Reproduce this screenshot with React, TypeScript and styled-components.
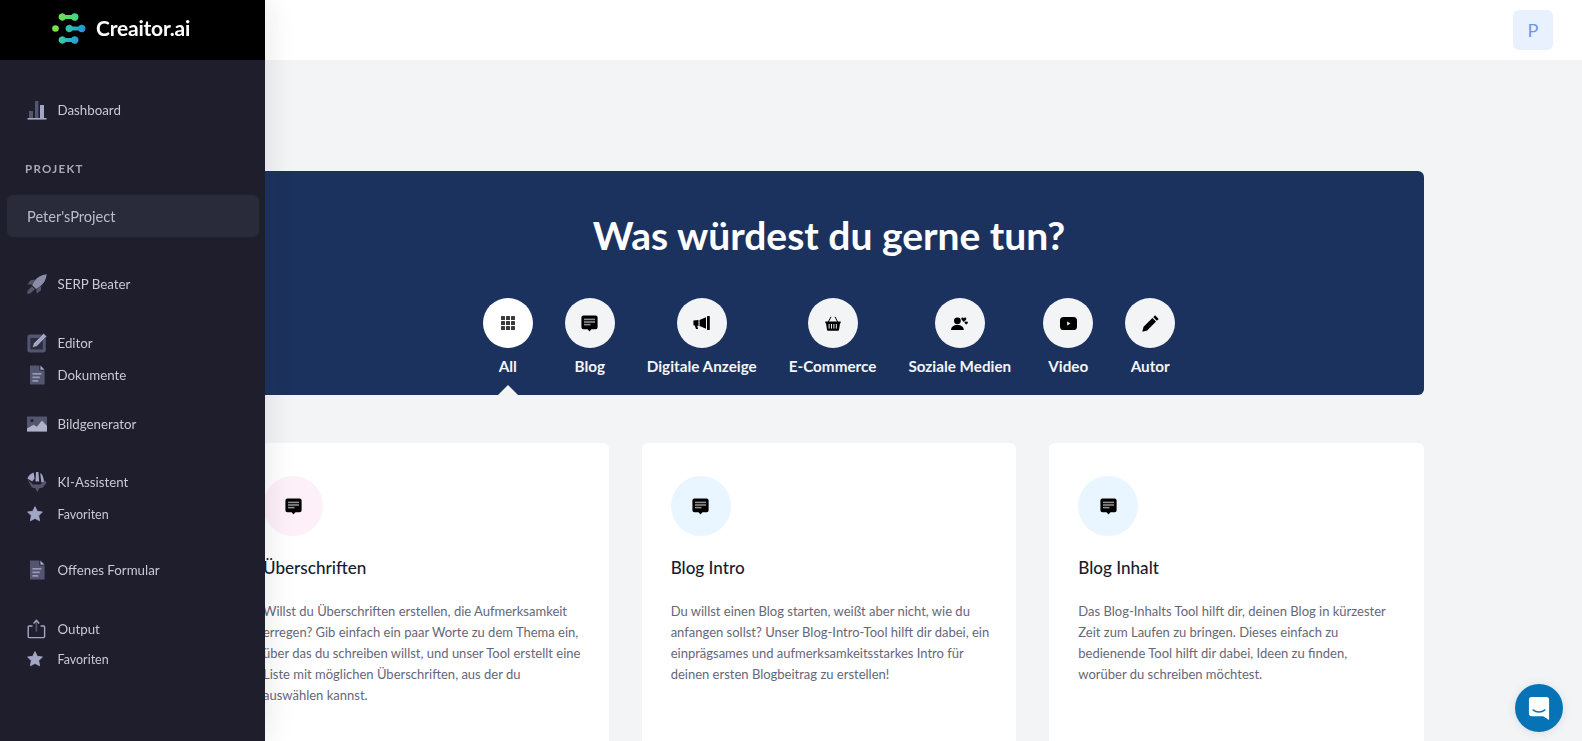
import React from "react";
import styled, { createGlobalStyle } from "styled-components";

const Global = createGlobalStyle`
  html, body { margin: 0; padding: 0; height: 100%; overflow: hidden; background: #f3f4f6; }
  * { box-sizing: border-box; }
  body { font-family: "Lato", "Liberation Sans", sans-serif; }
`;

const Page = styled.div`
  width: 100%;
  height: 741px;
  overflow: hidden;
  background: #f3f4f6;
  display: flex;
  flex-direction: column;
`;

const Sidebar = styled.aside`
  position: fixed;
  left: 0;
  top: 0;
  bottom: 0;
  width: 265px;
  background: #1e1e2d;
  box-shadow: 0 0 28px rgba(30, 30, 45, 0.12);
  z-index: 3;
`;

const LogoBar = styled.div`
  height: 60px;
  background: #000;
  display: flex;
  align-items: center;
  padding: 0 0 3px 52px;
  gap: 10px;
`;

const LogoText = styled.span`
  color: #fff;
  font-size: 21px;
  font-weight: 700;
  letter-spacing: -0.2px;
  padding-bottom: 3px;
`;

const Menu = styled.nav`
  display: flex;
  flex-direction: column;
  padding-top: 34px;
`;

const Item = styled.div<{ $top?: number; $small?: boolean }>`
  height: 32px;
  margin-top: ${(p) => p.$top ?? 0}px;
  padding-left: 27px;
  display: flex;
  align-items: center;
  color: #c9c9d3;
  font-size: ${(p) => (p.$small ? 12.5 : 13.3)}px;
`;

const IconSlot = styled.span`
  width: 30.5px;
  height: 22px;
  flex: none;
  display: flex;
  align-items: center;
`;

const SectionLabel = styled.div`
  margin-top: 35px;
  height: 16px;
  line-height: 16px;
  padding-left: 25px;
  color: #a9a9b8;
  font-size: 11.5px;
  font-weight: 700;
  letter-spacing: 1.3px;
`;

const ProjectRow = styled.div`
  margin: 18px 6px 0 7px;
  height: 42px;
  border-radius: 6px;
  background: #2a2b3a;
  display: flex;
  align-items: center;
  padding-left: 20px;
  color: #bcbcc9;
  font-size: 14.6px;
`;

const TopBar = styled.header`
  height: 60px;
  flex: none;
  background: #fff;
  display: flex;
  align-items: center;
  justify-content: flex-end;
  padding-right: 29px;
`;

const Avatar = styled.div`
  width: 40px;
  height: 40px;
  border-radius: 6px;
  background: #e9f1fe;
  color: #6f97e6;
  font-size: 18px;
  display: flex;
  align-items: center;
  justify-content: center;
`;

const Content = styled.main`
  width: 1190px;
  margin-left: 234px;
  padding-top: 111px;
  display: flex;
  flex-direction: column;
`;

const Banner = styled.section`
  position: relative;
  height: 224px;
  border-radius: 6px;
  background: #1c325e;
  display: flex;
  flex-direction: column;
  align-items: center;
`;

const Title = styled.h1`
  margin: 36px 0 0;
  color: #fff;
  font-size: 39px;
  line-height: 56px;
  font-weight: 700;
`;

const Tabs = styled.div`
  margin-top: 35px;
  display: flex;
  gap: 32px;
`;

const Tab = styled.div`
  position: relative;
  display: flex;
  flex-direction: column;
  align-items: center;
  color: #f3f4f6;
  font-size: 15.25px;
  font-weight: 700;
  line-height: 20px;
  min-width: 50px;
`;

const TabCircle = styled.div<{ $active?: boolean }>`
  width: 50px;
  height: 50px;
  border-radius: 50%;
  background: ${(p) => (p.$active ? "#fff" : "#f3f4f6")};
  display: flex;
  align-items: center;
  justify-content: center;
  margin-bottom: 8px;
`;

const Caret = styled.span`
  position: absolute;
  left: 50%;
  top: 87px;
  margin-left: -10px;
  width: 0;
  height: 0;
  border-left: 10px solid transparent;
  border-right: 10px solid transparent;
  border-bottom: 10px solid #f3f4f6;
`;

const Cards = styled.div`
  margin-top: 48px;
  display: grid;
  grid-template-columns: repeat(3, 1fr);
  gap: 33px;
`;

const Card = styled.article`
  height: 340px;
  background: #fff;
  border-radius: 6px;
  padding: 33px 27px 0 29px;
`;

const CardCircle = styled.div<{ $tint: string }>`
  width: 60px;
  height: 60px;
  border-radius: 50%;
  background: ${(p) => p.$tint};
  display: flex;
  align-items: center;
  justify-content: center;
`;

const CardTitle = styled.h3`
  margin: 20px 0 0;
  color: #181c32;
  font-size: 17.1px;
  line-height: 24px;
  font-weight: 500;
`;

const CardText = styled.p`
  margin: 21px 0 0;
  color: #666779;
  font-size: 13px;
  line-height: 21px;
`;

const ChatButton = styled.div`
  position: fixed;
  right: 19px;
  bottom: 9px;
  width: 48px;
  height: 48px;
  border-radius: 50%;
  background: #0773b7;
  box-shadow: 0 1px 10px rgba(0, 0, 0, 0.1);
  display: flex;
  align-items: center;
  justify-content: center;
  z-index: 4;
`;

const L = "#a4a6c6";
const D = "#54556f";

const Bar = ({ x, y, g }: { x: number; y: number; g: string }) => (
  <path
    fill={`url(#${g})`}
    d={`M${x} ${y}a3.8 3.8 0 0 1 7-2h6a3.8 3.800 0 1 1 0 4h-6a3.8 3.800 0 0 1-7-2z`}
  />
);

const Logo = () => (
  <svg width="34" height="31" viewBox="0 0 34 31">
    <defs>
      <linearGradient id="lgTop" x1="0" y1="0" x2="1" y2="0">
        <stop offset="0" stopColor="#74e04e" />
        <stop offset="1" stopColor="#3fd48e" />
      </linearGradient>
      <linearGradient id="lgMid" x1="0" y1="0" x2="1" y2="0">
        <stop offset="0" stopColor="#2fc9a8" />
        <stop offset="1" stopColor="#2291d8" />
      </linearGradient>
      <linearGradient id="lgBot" x1="0" y1="0" x2="1" y2="0">
        <stop offset="0" stopColor="#36d2a6" />
        <stop offset="1" stopColor="#2698d6" />
      </linearGradient>
    </defs>
    <Bar x={6.5} y={4} g="lgTop" />
    <circle cx="3.5" cy="15.5" r="3.3" fill="#7ae04c" />
    <Bar x={13.5} y={15.5} g="lgMid" />
    <Bar x={6.5} y={27} g="lgBot" />
  </svg>
);

const DashIcon = () => (
  <svg width="20" height="20" viewBox="0 0 20 20">
    <rect x="2" y="11" width="4" height="7" fill={D} />
    <rect x="8" y="1" width="3.4" height="17" fill={D} />
    <rect x="13" y="5" width="4" height="13" fill={L} />
    <rect x="0.5" y="18" width="19" height="1.6" fill={L} />
  </svg>
);

const RocketIcon = () => (
  <svg width="20" height="20" viewBox="0 0 20 20">
    <path d="M19.7 0.3c-5.4.6-9.6 3-12.4 6.8L5 11l4 4 3.8-2.2c3.9-2.9 6.4-7 6.9-12.5z" fill="#8b8ca8" />
    <path d="M8 5.6 3.6 6.200.4 10.400 5 10.600zM14.400 12l-.6 4.400-4.200 3.200-.2-4.600z" fill={D} />
    <path d="M4.800 12.200.4 17l-.2 2.800 3-.2 4.800-4.400z" fill={D} />
  </svg>
);

const EditIcon = () => (
  <svg width="20" height="20" viewBox="0 0 20 20">
    <rect x="0.4" y="1.6" width="18.4" height="18" rx="2.4" fill={D} />
    <rect x="3.4" y="5" width="12.4" height="11.4" fill="#2b2b3e" />
    <path d="M16.600 0.200l3.200 3.200-10 10-4.600 1.400 1.400-4.600z" stroke="#1e1e2d" strokeWidth="0.6" fill={L} />
  </svg>
);

const DocIcon = () => (
  <svg width="20" height="20" viewBox="0 0 20 20">
    <path d="M3 0.600h9.400v5H17.600v14H3z" fill={D} />
    <path d="M13.400 0.400 17.600 4.800h-4.200z" fill={L} />
    <rect x="5.4" y="8" width="9" height="1.7" fill="#9799b6" />
    <rect x="5.4" y="11.5" width="7.4" height="1.7" fill="#9799b6" />
    <rect x="5.4" y="15" width="5.8" height="1.7" fill="#9799b6" />
  </svg>
);

const ImageIcon = () => (
  <svg width="20" height="16" viewBox="0 0 20 16">
    <rect x="0" y="0.5" width="20" height="15" fill={D} />
    <circle cx="5" cy="4.6" r="1.5" fill="#1e1e2d" />
    <path d="M0 12.500 6.500 8.800l3.400 2L15 4.500l5 5.500v5.500H0z" fill="#b0b2cc" />
  </svg>
);

const AiIcon = () => (
  <svg width="20" height="20" viewBox="0 0 20 20">
    <path d="M0.4 6.600 C1.600 3.600 3.600 1.600 6.600 0.600 L7.600 6.400 L5.200 9.600 Z" fill={L} />
    <path d="M9 0h2.400l.8 9.400H8.400z" fill={L} />
    <path d="M13.200 1c2 1 3.200 3.600 3.800 9l-2.600.4z" fill={L} />
    <path d="M0.400 7.400 6 12.400h7.400l4.600-4 1.600 2.400-4 5-3.400.4-1.800 3.800-2-3.800-3.600-.6z" fill={D} />
  </svg>
);

const StarIcon = () => (
  <svg width="16" height="16" viewBox="0 0 16 16">
    <path d="M8 .6l2.300 4.700 5.100.7-3.700 3.600.9 5.200L8 12.400l-4.600 2.400.9-5.200L.6 6l5.100-.7z" fill={L} stroke={L} strokeWidth="0.8" strokeLinejoin="round" />
  </svg>
);

const OutputIcon = () => (
  <svg width="20" height="20" viewBox="0 0 20 20" fill="none">
    <path d="M5.500 7H2.200a1 1 0 0 0-1 1v9.600a1 1 0 0 0 1 1h14.400a1 1 0 0 0 1-1V8a1 1 0 0 0-1-1h-3" stroke={L} strokeWidth="1.4" />
    <path d="M9.400 12.500V2" stroke={D} strokeWidth="1.6" />
    <path d="M6.600 4.400 9.400 1.400l2.800 3" stroke={L} strokeWidth="1.4" />
  </svg>
);

const GridIcon = () => (
  <svg width="14" height="14" viewBox="0 0 14 14" fill="#3a3a3a">
    {[0, 5, 10].flatMap((y) =>
      [0, 5, 10].map((x) => <rect key={`${x}-${y}`} x={x} y={y} width="4" height="4" rx="0.6" />)
    )}
  </svg>
);

const BubbleIcon = () => (
  <svg width="17" height="17" viewBox="0 0 17 17">
    <path d="M2.400 0.400h12.200a2 2 0 0 1 2 2v9.800a2 2 0 0 1-2 2h-4.200l-1.900 2.400-1.900-2.400H2.400a2 2 0 0 1-2-2V2.400a2 2 0 0 1 2-2z" fill="#000" />
    <rect x="3" y="3.6" width="11" height="1.6" fill="#8e8e8e" />
    <rect x="3" y="6.2" width="11" height="1.6" fill="#8e8e8e" />
    <rect x="3" y="8.8" width="6.5" height="1.6" fill="#8e8e8e" />
  </svg>
);

const MegaphoneIcon = () => (
  <svg width="17" height="14" viewBox="0 0 17 14" fill="#000">
    <rect x="14" y="0" width="2.8" height="14" rx="0.6" />
    <path d="M13 1.200v11.600L6.500 10V4z" />
    <path d="M.4 4.600 5.500 4v6l-1.200-.2L5 13H3L1.800 9.400.4 9.200z" />
  </svg>
);

const BasketIcon = () => (
  <svg width="16" height="15" viewBox="0 0 16 15">
    <path d="M3 6.500 6 .800M13 6.500 10 .800" stroke="#000" strokeWidth="1" fill="none" />
    <path d="M.3 5.500h15.400v1.700h-.700l-1 6.800a1 1 0 0 1-1 .800H3a1 1 0 0 1-1-.800L1 7.200H.300z" fill="#000" />
    <g fill="#e8e8e8">
      <rect x="3.6" y="8" width="1" height="4.6" />
      <rect x="6" y="8" width="1" height="4.6" />
      <rect x="8.4" y="8" width="1" height="4.6" />
      <rect x="10.8" y="8" width="1" height="4.6" />
    </g>
  </svg>
);

const SocialIcon = () => (
  <svg width="17" height="13" viewBox="0 0 17 13" fill="#000">
    <circle cx="6.4" cy="3.8" r="3.4" />
    <path d="M0 13c0-3 2.600-5 6.400-5s6.400 2 6.400 5z" />
    <path d="M12.800 1.300c.6-1.200 2.500-1 2.500.5 0 1.100-1.200 1.900-2.500 3.100-1.300-1.200-2.500-2-2.500-3.100 0-1.500 1.900-1.700 2.500-.5z" />
    <path d="M15.200 5c.4-.7 1.700-.6 1.700.4 0 .7-.8 1.300-1.700 2.100-.9-.8-1.700-1.400-1.700-2.100 0-1 1.300-1.100 1.700-.4z" />
  </svg>
);

const VideoIcon = () => (
  <svg width="17" height="13" viewBox="0 0 17 13">
    <rect x="0" y="0" width="17" height="13" rx="3.6" fill="#000" />
    <path d="M7.200 4.400 10.400 6.500l-3.200 2.100z" fill="#f3f4f6" />
  </svg>
);

const PenIcon = () => (
  <svg width="17" height="17" viewBox="0 0 16 16" fill="#000">
    <path d="M12.300 0.300 15.700 3.700 14 5.400 10.600 2z" />
    <path d="M9.800 2.800l3.400 3.400-8.300 8.300L.3 15.700l1.200-4.600z" />
  </svg>
);

const ChatIcon = () => (
  <svg width="22" height="25" viewBox="0 0 24 27">
    <path d="M4 1h16a3 3 0 0 1 3 3v22l-6.500-4H4a3 3 0 0 1-3-3V4a3 3 0 0 1 3-3z" fill="#fff" />
    <path d="M5.500 15c3.600 3 9.400 3 13 0" stroke="#0773b7" strokeWidth="1.5" fill="none" strokeLinecap="round" />
  </svg>
);

const tabs = [
  { label: "All", icon: <GridIcon />, active: true },
  { label: "Blog", icon: <BubbleIcon /> },
  { label: "Digitale Anzeige", icon: <MegaphoneIcon /> },
  { label: "E-Commerce", icon: <BasketIcon /> },
  { label: "Soziale Medien", icon: <SocialIcon /> },
  { label: "Video", icon: <VideoIcon /> },
  { label: "Autor", icon: <PenIcon /> },
];

const cards = [
  {
    tint: "#fdf0f8",
    title: "Überschriften",
    text: "Willst du Überschriften erstellen, die Aufmerksamkeit erregen? Gib einfach ein paar Worte zu dem Thema ein, über das du schreiben willst, und unser Tool erstellt eine Liste mit möglichen Überschriften, aus der du auswählen kannst.",
  },
  {
    tint: "#e9f5ff",
    title: "Blog Intro",
    text: "Du willst einen Blog starten, weißt aber nicht, wie du anfangen sollst? Unser Blog-Intro-Tool hilft dir dabei, ein einprägsames und aufmerksamkeitsstarkes Intro für deinen ersten Blogbeitrag zu erstellen!",
  },
  {
    tint: "#e9f5ff",
    title: "Blog Inhalt",
    text: "Das Blog-Inhalts Tool hilft dir, deinen Blog in kürzester Zeit zum Laufen zu bringen. Dieses einfach zu bedienende Tool hilft dir dabei, Ideen zu finden, worüber du schreiben möchtest.",
  },
];

export default function App() {
  return (
    <Page>
      <Global />
      <Sidebar>
        <LogoBar>
          <Logo />
          <LogoText>Creaitor.ai</LogoText>
        </LogoBar>
        <Menu>
          <Item><IconSlot><DashIcon /></IconSlot>Dashboard</Item>
          <SectionLabel>PROJEKT</SectionLabel>
          <ProjectRow>Peter'sProject</ProjectRow>
          <Item $top={31}><IconSlot><RocketIcon /></IconSlot>SERP Beater</Item>
          <Item $top={27}><IconSlot><EditIcon /></IconSlot>Editor</Item>
          <Item><IconSlot><DocIcon /></IconSlot>Dokumente</Item>
          <Item $top={17}><IconSlot><ImageIcon /></IconSlot>Bildgenerator</Item>
          <Item $top={26}><IconSlot><AiIcon /></IconSlot>KI-Assistent</Item>
          <Item $small><IconSlot><StarIcon /></IconSlot>Favoriten</Item>
          <Item $top={24}><IconSlot><DocIcon /></IconSlot>Offenes Formular</Item>
          <Item $top={27}><IconSlot><OutputIcon /></IconSlot>Output</Item>
          <Item $small $top={-2}><IconSlot><StarIcon /></IconSlot>Favoriten</Item>
        </Menu>
      </Sidebar>
      <TopBar>
        <Avatar>P</Avatar>
      </TopBar>
      <Content>
        <Banner>
          <Title>Was würdest du gerne tun?</Title>
          <Tabs>
            {tabs.map((t) => (
              <Tab key={t.label}>
                <TabCircle $active={t.active}>{t.icon}</TabCircle>
                {t.label}
                {t.active && <Caret />}
              </Tab>
            ))}
          </Tabs>
        </Banner>
        <Cards>
          {cards.map((c) => (
            <Card key={c.title}>
              <CardCircle $tint={c.tint}><BubbleIcon /></CardCircle>
              <CardTitle>{c.title}</CardTitle>
              <CardText>{c.text}</CardText>
            </Card>
          ))}
        </Cards>
      </Content>
      <ChatButton><ChatIcon /></ChatButton>
    </Page>
  );
}
